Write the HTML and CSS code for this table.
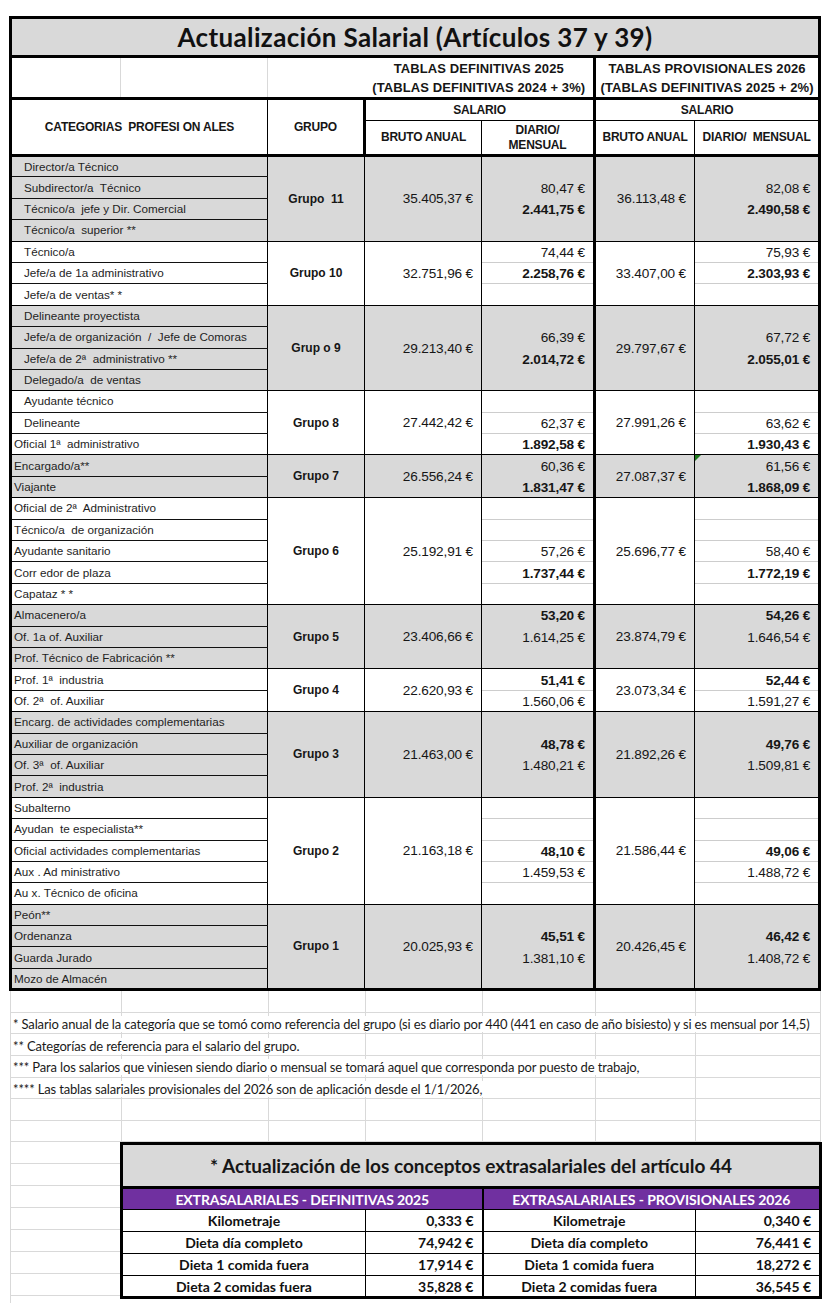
FILE: index.html
```html
<!DOCTYPE html>
<html lang="es">
<head>
<meta charset="utf-8">
<title>Actualización Salarial</title>
<link rel="stylesheet" href="styles.css">
</head>
<body>
<div class="page">
<table class="main">
<colgroup><col class="c1"><col class="c2"><col class="c3"><col class="c4"><col class="c5"><col class="c6"><col class="c7"></colgroup>
<tr class="r-title"><td colspan="7" class="title">Actualización Salarial (Artículos 37 y 39)</td></tr>
<tr class="r-tables"><td class="lg"></td><td class="lg"></td><td class="bk"></td><td colspan="2" class="th2 tk">TABLAS DEFINITIVAS 2025<br>(TABLAS DEFINITIVAS 2024 + 3%)</td><td colspan="2" class="th2">TABLAS PROVISIONALES 2026<br>(TABLAS DEFINITIVAS 2025 + 2%)</td></tr>
<tr class="r-sal"><td colspan="2" rowspan="2" class="th hb">CATEGORIAS&nbsp; PROFESI ON ALES</td><td rowspan="2" class="th hb tk">GRUPO</td><td colspan="2" class="th tk">SALARIO</td><td colspan="2" class="th">SALARIO</td></tr>
<tr class="r-bruto"><td class="th hb">BRUTO ANUAL</td><td class="th hb tk">DIARIO/<br>MENSUAL</td><td class="th hb">BRUTO ANUAL</td><td class="th hb last">DIARIO/&nbsp; MENSUAL</td></tr>

<tr class="g"><td colspan="2" class="cat in">Director/a Técnico</td><td rowspan="4" class="grp">Grupo&nbsp; 11</td><td rowspan="4" class="bru">35.405,37 €</td><td class="dia"></td><td rowspan="4" class="bru">36.113,48 €</td><td class="dia last"></td></tr>
<tr class="g"><td colspan="2" class="cat in">Subdirector/a&nbsp; Técnico</td><td class="dia">80,47 €</td><td class="dia last">82,08 €</td></tr>
<tr class="g"><td colspan="2" class="cat in">Técnico/a&nbsp; jefe y Dir. Comercial</td><td class="dia b">2.441,75 €</td><td class="dia last b">2.490,58 €</td></tr>
<tr class="g e"><td colspan="2" class="cat in">Técnico/a&nbsp; superior **</td><td class="dia"></td><td class="dia last"></td></tr>

<tr><td colspan="2" class="cat in">Técnico/a</td><td rowspan="3" class="grp">Grupo 10</td><td rowspan="3" class="bru">32.751,96 €</td><td class="dia">74,44 €</td><td rowspan="3" class="bru">33.407,00 €</td><td class="dia last">75,93 €</td></tr>
<tr><td colspan="2" class="cat in">Jefe/a de 1a administrativo</td><td class="dia b">2.258,76 €</td><td class="dia last b">2.303,93 €</td></tr>
<tr class="e"><td colspan="2" class="cat in">Jefe/a de ventas* *</td><td class="dia"></td><td class="dia last"></td></tr>

<tr class="g"><td colspan="2" class="cat in">Delineante proyectista</td><td rowspan="4" class="grp">Grup o 9</td><td rowspan="4" class="bru">29.213,40 €</td><td class="dia"></td><td rowspan="4" class="bru">29.797,67 €</td><td class="dia last"></td></tr>
<tr class="g"><td colspan="2" class="cat in">Jefe/a de organización&nbsp; /&nbsp; Jefe de Comoras</td><td class="dia">66,39 €</td><td class="dia last">67,72 €</td></tr>
<tr class="g"><td colspan="2" class="cat in">Jefe/a de 2ª&nbsp; administrativo **</td><td class="dia b">2.014,72 €</td><td class="dia last b">2.055,01 €</td></tr>
<tr class="g e"><td colspan="2" class="cat in">Delegado/a&nbsp; de ventas</td><td class="dia"></td><td class="dia last"></td></tr>

<tr><td colspan="2" class="cat in">Ayudante técnico</td><td rowspan="3" class="grp">Grupo 8</td><td rowspan="3" class="bru">27.442,42 €</td><td class="dia"></td><td rowspan="3" class="bru">27.991,26 €</td><td class="dia last"></td></tr>
<tr><td colspan="2" class="cat in">Delineante</td><td class="dia">62,37 €</td><td class="dia last">63,62 €</td></tr>
<tr class="e"><td colspan="2" class="cat">Oficial 1ª&nbsp; administrativo</td><td class="dia b">1.892,58 €</td><td class="dia last b">1.930,43 €</td></tr>

<tr class="g"><td colspan="2" class="cat">Encargado/a**</td><td rowspan="2" class="grp">Grupo 7</td><td rowspan="2" class="bru">26.556,24 €</td><td class="dia">60,36 €</td><td rowspan="2" class="bru">27.087,37 €</td><td class="dia last flag">61,56 €</td></tr>
<tr class="g e"><td colspan="2" class="cat">Viajante</td><td class="dia b">1.831,47 €</td><td class="dia last b">1.868,09 €</td></tr>

<tr><td colspan="2" class="cat">Oficial de 2ª&nbsp; Administrativo</td><td rowspan="5" class="grp">Grupo 6</td><td rowspan="5" class="bru">25.192,91 €</td><td class="dia"></td><td rowspan="5" class="bru">25.696,77 €</td><td class="dia last"></td></tr>
<tr><td colspan="2" class="cat">Técnico/a&nbsp; de organización</td><td class="dia"></td><td class="dia last"></td></tr>
<tr><td colspan="2" class="cat">Ayudante sanitario</td><td class="dia">57,26 €</td><td class="dia last">58,40 €</td></tr>
<tr><td colspan="2" class="cat">Corr edor de plaza</td><td class="dia b">1.737,44 €</td><td class="dia last b">1.772,19 €</td></tr>
<tr class="e"><td colspan="2" class="cat">Capataz * *</td><td class="dia"></td><td class="dia last"></td></tr>

<tr class="g"><td colspan="2" class="cat">Almacenero/a</td><td rowspan="3" class="grp">Grupo 5</td><td rowspan="3" class="bru">23.406,66 €</td><td class="dia b">53,20 €</td><td rowspan="3" class="bru">23.874,79 €</td><td class="dia last b">54,26 €</td></tr>
<tr class="g"><td colspan="2" class="cat">Of. 1a of. Auxiliar</td><td class="dia">1.614,25 €</td><td class="dia last">1.646,54 €</td></tr>
<tr class="g e"><td colspan="2" class="cat">Prof. Técnico de Fabricación **</td><td class="dia"></td><td class="dia last"></td></tr>

<tr><td colspan="2" class="cat">Prof. 1ª&nbsp; industria</td><td rowspan="2" class="grp">Grupo 4</td><td rowspan="2" class="bru">22.620,93 €</td><td class="dia b">51,41 €</td><td rowspan="2" class="bru">23.073,34 €</td><td class="dia last b">52,44 €</td></tr>
<tr class="e"><td colspan="2" class="cat">Of. 2ª&nbsp; of. Auxiliar</td><td class="dia">1.560,06 €</td><td class="dia last">1.591,27 €</td></tr>

<tr class="g"><td colspan="2" class="cat">Encarg. de actividades complementarias</td><td rowspan="4" class="grp">Grupo 3</td><td rowspan="4" class="bru">21.463,00 €</td><td class="dia"></td><td rowspan="4" class="bru">21.892,26 €</td><td class="dia last"></td></tr>
<tr class="g"><td colspan="2" class="cat">Auxiliar de organización</td><td class="dia b">48,78 €</td><td class="dia last b">49,76 €</td></tr>
<tr class="g"><td colspan="2" class="cat">Of. 3ª&nbsp; of. Auxiliar</td><td class="dia">1.480,21 €</td><td class="dia last">1.509,81 €</td></tr>
<tr class="g e"><td colspan="2" class="cat">Prof. 2ª&nbsp; industria</td><td class="dia"></td><td class="dia last"></td></tr>

<tr><td colspan="2" class="cat">Subalterno</td><td rowspan="5" class="grp">Grupo 2</td><td rowspan="5" class="bru">21.163,18 €</td><td class="dia"></td><td rowspan="5" class="bru">21.586,44 €</td><td class="dia last"></td></tr>
<tr><td colspan="2" class="cat">Ayudan&nbsp; te especialista**</td><td class="dia"></td><td class="dia last"></td></tr>
<tr><td colspan="2" class="cat">Oficial actividades complementarias</td><td class="dia b">48,10 €</td><td class="dia last b">49,06 €</td></tr>
<tr><td colspan="2" class="cat">Aux . Ad ministrativo</td><td class="dia">1.459,53 €</td><td class="dia last">1.488,72 €</td></tr>
<tr class="e"><td colspan="2" class="cat">Au x. Técnico de oficina</td><td class="dia"></td><td class="dia last"></td></tr>

<tr class="g"><td colspan="2" class="cat">Peón**</td><td rowspan="4" class="grp">Grupo 1</td><td rowspan="4" class="bru">20.025,93 €</td><td class="dia"></td><td rowspan="4" class="bru">20.426,45 €</td><td class="dia last"></td></tr>
<tr class="g"><td colspan="2" class="cat">Ordenanza</td><td class="dia b">45,51 €</td><td class="dia last b">46,42 €</td></tr>
<tr class="g"><td colspan="2" class="cat">Guarda Jurado</td><td class="dia">1.381,10 €</td><td class="dia last">1.408,72 €</td></tr>
<tr class="g e"><td colspan="2" class="cat">Mozo de Almacén</td><td class="dia"></td><td class="dia last"></td></tr>
</table>

<div class="sheet">
<div class="srow"></div>
<div class="srow"><span class="note">* Salario anual de la categoría que se tomó como referencia del grupo (si es diario por 440 (441 en caso de año bisiesto) y si es mensual por 14,5)</span></div>
<div class="srow"><span class="note">** Categorías de referencia para el salario del grupo.</span></div>
<div class="srow"><span class="note">*** Para los salarios que viniesen siendo diario o mensual se tomará aquel que corresponda por puesto de trabajo,</span></div>
<div class="srow"><span class="note">**** Las tablas salariales provisionales del 2026 son de aplicación desde el 1/1/2026,</span></div>
<div class="srow"></div>
<div class="srow"></div>
</div>

<div class="lower">
<div class="lower-left">
<div class="lrow"></div><div class="lrow"></div><div class="lrow"></div><div class="lrow"></div><div class="lrow"></div><div class="lrow"></div><div class="lrow"></div><div class="lrow"></div>
</div>
<table class="extra">
<colgroup><col class="x1"><col class="x2"><col class="x3"><col class="x4"></colgroup>
<tr><td colspan="4" class="ex-title">* Actualización de los conceptos extrasalariales del artículo 44</td></tr>
<tr class="ex-head"><td colspan="2" class="mid">EXTRASALARIALES - DEFINITIVAS 2025</td><td colspan="2">EXTRASALARIALES - PROVISIONALES 2026</td></tr>
<tr class="ex-row"><td class="lbl">Kilometraje</td><td class="val mid">0,333 €</td><td class="lbl">Kilometraje</td><td class="val">0,340 €</td></tr>
<tr class="ex-row"><td class="lbl">Dieta día completo</td><td class="val mid">74,942 €</td><td class="lbl">Dieta día completo</td><td class="val">76,441 €</td></tr>
<tr class="ex-row"><td class="lbl">Dieta 1 comida fuera</td><td class="val mid">17,914 €</td><td class="lbl">Dieta 1 comida fuera</td><td class="val">18,272 €</td></tr>
<tr class="ex-row"><td class="lbl">Dieta 2 comidas fuera</td><td class="val mid">35,828 €</td><td class="lbl">Dieta 2 comidas fuera</td><td class="val">36,545 €</td></tr>
</table>
</div>
</div>
</body>
</html>
```

FILE: styles.css
```css
* { box-sizing: border-box; }
html, body { margin: 0; padding: 0; background: #fff; }
body { font-family: "Liberation Sans", Arial, sans-serif; color: #161616; }

.page { padding: 16px 0 0 9px; width: 828px; }

/* ---------- main salary table ---------- */
.main {
  border-collapse: collapse;
  table-layout: fixed;
  width: 812px;
  border: 3px solid #000;
}
.main td { padding: 0; overflow: hidden; white-space: nowrap; }
.c1 { width: 110px; }
.c2 { width: 147px; }
.c3 { width: 97px; }
.c4 { width: 117px; }
.c5 { width: 113px; }
.c6 { width: 100px; }
.c7 { width: 125px; }

.title {
  height: 39px;
  background: #d9d9d9;
  border-bottom: 3px solid #000;
  text-align: center;
  font-family: Lato, "Liberation Sans", sans-serif;
  font-weight: 700;
  font-size: 26px;
  letter-spacing: 0.35px;
  color: #111;
}

.r-tables td { height: 42px; border-bottom: 3px solid #000; }
.r-tables .lg { border-right: 1px solid #d9d9d9; }
.th2 {
  text-align: center;
  font-weight: 700;
  font-size: 13px;
  line-height: 19px;
  letter-spacing: 0.1px;
}

.tk { border-right: 3px solid #000; }
.th {
  text-align: center;
  font-weight: 700;
  font-size: 12px;
  line-height: 15px;
  letter-spacing: -0.2px;
  border-bottom: 1px solid #000;
  border-right: 1px solid #000;
}
.main .tk { border-right: 3px solid #000; }
.main .last { border-right: 0; }
.r-sal td { height: 22px; }
.r-bruto td { height: 35px; }
.main .hb { border-bottom: 3px solid #000; }

/* data rows */
.main tr.g td { background: #d9d9d9; }
.cat {
  height: 21.4px;
  font-size: 11.7px;
  padding: 0 0 1px 2px !important;
  border-right: 1px solid #000;
  border-bottom: 1px solid #111;
  color: #1e1e1e;
  vertical-align: middle;
}
.cat.in { padding-left: 12px !important; }
.grp {
  text-align: center;
  font-weight: 700;
  font-size: 12px;
  border-right: 1px solid #000;
  border-bottom: 1px solid #000;
}
.bru {
  text-align: right;
  font-size: 13.6px;
  padding-right: 8px !important;
  border-right: 1px solid #000;
  border-bottom: 1px solid #000;
  letter-spacing: -0.15px;
}
.dia {
  text-align: right;
  font-size: 13.6px;
  padding: 1px 8px 0 0 !important;
  border-right: 3px solid #000;
  border-bottom: 1px solid #cdcdcd;
  letter-spacing: -0.15px;
}
.main tr.g .dia { border-bottom-color: #d9d9d9; }
.main tr.e td { border-bottom: 1px solid #000; }
.main tr.e .dia, .main tr.g.e .dia { border-bottom-color: #000; }
.b { font-weight: 700; }

.flag { position: relative; }
.flag::before {
  content: "";
  position: absolute;
  left: 0;
  top: 0;
  border-top: 6px solid #1e7b1e;
  border-right: 6px solid transparent;
}

/* ---------- sheet gridlines with notes ---------- */
.sheet {
  width: 811px;
  margin-left: 1px;
  border-left: 1px solid #d9d9d9;
}
.srow {
  height: 21.6px;
  border-bottom: 1px solid #d9d9d9;
  display: flex;
  align-items: center;
  padding-top: 2px;
  background-image:
    linear-gradient(#d9d9d9, #d9d9d9), linear-gradient(#d9d9d9, #d9d9d9),
    linear-gradient(#d9d9d9, #d9d9d9), linear-gradient(#d9d9d9, #d9d9d9),
    linear-gradient(#d9d9d9, #d9d9d9), linear-gradient(#d9d9d9, #d9d9d9),
    linear-gradient(#d9d9d9, #d9d9d9);
  background-size: 1px 100%;
  background-repeat: no-repeat;
  background-position: 110px 0, 257px 0, 354px 0, 471px 0, 584px 0, 684px 0, 809px 0;
}
.note {
  background: #fff;
  font-family: Lato, "Liberation Sans", sans-serif;
  font-size: 13px;
  line-height: 16px;
  padding: 0 3px 0 2px;
  white-space: nowrap;
  color: #1a1a1a;
  letter-spacing: -0.15px;
}

/* ---------- lower extrasalarial table ---------- */
.lower { display: flex; align-items: flex-start; margin-left: 1px; }
.lower-left { width: 110px; border-left: 1px solid #d9d9d9; }
.lrow { height: 22px; border-bottom: 1px solid #d9d9d9; }

.extra {
  border-collapse: collapse;
  table-layout: fixed;
  width: 701px;
  border: 3px solid #000;
  font-family: Lato, "Liberation Sans", sans-serif;
}
.x1 { width: 244px; }
.x2 { width: 117px; }
.x3 { width: 213px; }
.x4 { width: 125px; }
.extra td { padding: 0; white-space: nowrap; }
.ex-title {
  height: 44px;
  background: #d9d9d9;
  text-align: center;
  font-size: 19px;
  font-weight: 700;
  color: #161616;
  letter-spacing: 0;
  border-bottom: 3px solid #000;
}
.ex-head td {
  height: 22px;
  background: #7030a0;
  color: #fff;
  text-align: center;
  font-weight: 700;
  font-size: 14px;
  letter-spacing: -0.1px;
  border-bottom: 1px solid #000;
}
.ex-row td {
  height: 22px;
  font-size: 14px;
  font-weight: 700;
  color: #111;
  border-bottom: 1px solid #000;
  border-right: 1px solid #000;
}
.extra .mid { border-right: 2px solid #000; }
.lbl { text-align: center; }
.val { text-align: right; padding-right: 8px !important; }
```
